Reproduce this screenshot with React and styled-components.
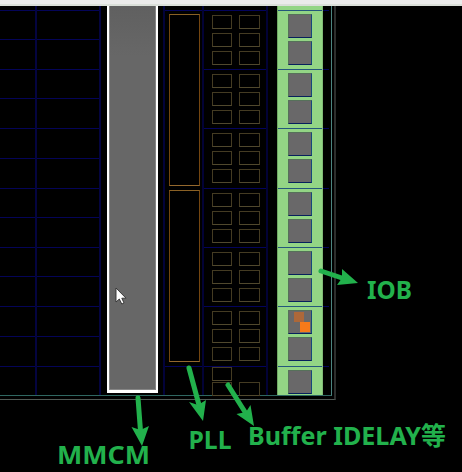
import React from "react";
import styled, { createGlobalStyle } from "styled-components";

const GlobalStyle = createGlobalStyle`
  * { box-sizing: border-box; }
  body { margin: 0; background: #000; overflow: hidden; }
`;

const GREEN = "#22b14c";
const NAVY = "#03035c";

const Page = styled.main`
  position: relative;
  width: 462px;
  height: 472px;
  background: #000;
  overflow: hidden;
`;

const TopBar = styled.header`
  height: 6px;
  background: #ebebeb;
  border-bottom: 2px solid #dadfd9;
`;

const Package = styled.section`
  width: 336px;
  height: 394px;
  padding: 0 3px 3px 0;
  border-right: 2px solid #2c2e2d;
  border-bottom: 1px solid #515a56;
`;

const Die = styled.div`
  display: flex;
  width: 332px;
  height: 390px;
  border-right: 1px solid #4d8580;
  border-bottom: 1px solid #2f6761;
`;

const Fabric = styled.div`
  display: grid;
  grid-template-columns: 37px 64px;
  width: 107px;
`;

const FabricColumn = styled.div`
  border-right: 2px solid #040440;
`;

const FabricTile = styled.div`
  height: ${(p) => p.$h}px;
  border-bottom: 1px solid #040458;
`;

const ClockManager = styled.div`
  width: 51px;
  height: 387px;
  border: solid #fff;
  border-width: 0 2px 3px;
  background: linear-gradient(#606060, #676767 50px);
  box-shadow: inset 1px -1px 0 #858585, inset -1px 0 0 #858585;
`;

const PllRegion = styled.div`
  width: 41px;
  margin-left: 5px;
  border-left: 2px solid #02023a;
  border-right: 2px solid #020236;
`;

const RowLine = styled.div`
  height: 5px;
  border-bottom: 1px solid ${(p) => p.$c || NAVY};
`;

const PllBox = styled.div`
  width: 31px;
  height: 172px;
  margin: ${(p) => p.$top}px 0 0 4px;
  border: 1px solid #744610;
  border-top-color: #8a6125;
  border-bottom-color: #94682d;
`;

const BufferRegion = styled.div`
  width: 64px;
  height: 389px;
  border-right: 2px solid #020236;
`;

const BufferBank = styled.div`
  display: grid;
  grid-template: repeat(3, 14px) / 20px 21px;
  column-gap: 7px;
  row-gap: 4px;
  height: ${(p) => p.$h}px;
  padding: 4px 0 0 8px;
  border-bottom: 1px solid ${NAVY};
`;

const BufferFoot = styled.div`
  display: grid;
  grid-template: repeat(2, 14px) / 20px 21px;
  column-gap: 7px;
  row-gap: 1px;
  height: 29px;
  overflow: hidden;
  padding-left: 8px;
`;

const Buffer = styled.div`
  border: 1px solid #443b22;
  border-bottom-color: #50482d;
  grid-column: ${(p) => p.$col || "auto"};
`;

const IoStrip = styled.div`
  width: 46px;
  height: 389px;
  margin-left: 9px;
  background: #93d585;
  border-left: 1px solid #70aa64;
  border-right: 1px solid #81ba76;
`;

const IoBank = styled.div`
  display: flex;
  flex-direction: column;
  gap: 3px;
  height: ${(p) => p.$h}px;
  padding: 3px 0 0 10px;
  border-bottom: 1px solid #24577b;
`;

const IoFoot = styled.div`
  padding: 3px 0 0 10px;
`;

const IoPad = styled.div`
  width: 24px;
  height: 24px;
  padding: 1px 0 0 5px;
  background: #696869;
  border: 1px solid #56715a;
  border-right-color: #17477a;
  border-bottom-color: #07205c;
`;

const Site = styled.div`
  width: 10px;
  height: 10px;
  margin-left: ${(p) => p.$x}px;
  background: ${(p) => p.$c};
`;

const EdgeColumn = styled.div`
  width: 6px;
`;

const EdgeTick = styled.div`
  height: ${(p) => p.$h}px;
  border-bottom: 1px solid ${NAVY};
`;

const Overlay = styled.svg`
  position: absolute;
  inset: 0;
  width: 462px;
  height: 472px;
`;

const Label = styled.text`
  font-family: "Noto Sans", "Noto Sans CJK SC", sans-serif;
  font-size: 25px;
  font-weight: 700;
  fill: ${GREEN};
`;

const BANKS = [59, 59, 60, 59, 59, 60];
const FABRIC_ROWS = [5, 29, 30, 29, 30, 30, 30, 29, 30, 29, 30, 30, 30];

const LABELS = [
  { text: "IOB", x: 367, y: 299, width: 45 },
  { text: "PLL", x: 188.5, y: 449, width: 43 },
  { text: "MMCM", x: 57, y: 464, width: 93 },
  { text: "Buffer IDELAY", x: 248, y: 445, width: 173 },
  { text: "等", x: 421, y: 445, width: 25 },
];

const ARROWS = [
  { from: [321, 271], to: [345, 279], head: "358,283 337,285 342,278 342,269" },
  { from: [189, 368], to: [199, 405], head: "203,421 189,402 198,405 206,400" },
  { from: [228, 385], to: [245, 412], head: "254,426 236.5,414 246,412 250.5,405" },
  { from: [138, 398], to: [140.5, 431], head: "142,446 131.5,427 140.5,430 149,426" },
];

function FabricTiles() {
  return FABRIC_ROWS.map((h, i) => <FabricTile key={i} $h={h} />);
}

function PllColumn() {
  return (
    <PllRegion>
      <RowLine />
      <PllBox $top={3} />
      <PllBox $top={4} />
      <RowLine />
    </PllRegion>
  );
}

function BufferColumn() {
  return (
    <BufferRegion>
      <RowLine />
      {BANKS.map((h, i) => (
        <BufferBank key={i} $h={h}>
          {Array.from({ length: 6 }, (_, n) => <Buffer key={n} />)}
        </BufferBank>
      ))}
      <BufferFoot>
        <Buffer $col="1" />
        <Buffer $col="1" />
        <Buffer $col="2" />
      </BufferFoot>
    </BufferRegion>
  );
}

function IoColumn() {
  return (
    <IoStrip>
      <RowLine $c="#24577b" />
      {BANKS.map((h, i) => (
        <IoBank key={i} $h={h}>
          <IoPad>
            {i === 5 && (
              <>
                <Site $x={0} $c="#ad6839" />
                <Site $x={6} $c="#f67a19" />
              </>
            )}
          </IoPad>
          <IoPad />
        </IoBank>
      ))}
      <IoFoot>
        <IoPad />
      </IoFoot>
    </IoStrip>
  );
}

function Arrow({ from, to, head }) {
  return (
    <g fill={GREEN} stroke={GREEN}>
      <line x1={from[0]} y1={from[1]} x2={to[0]} y2={to[1]} strokeWidth="5" strokeLinecap="round" />
      <polygon points={head} stroke="none" />
    </g>
  );
}

export default function App() {
  return (
    <Page>
      <GlobalStyle />
      <TopBar />
      <Package>
        <Die>
          <Fabric>
            <FabricColumn><FabricTiles /></FabricColumn>
            <FabricColumn><FabricTiles /></FabricColumn>
          </Fabric>
          <ClockManager />
          <PllColumn />
          <BufferColumn />
          <IoColumn />
          <EdgeColumn>
            <RowLine />
            {BANKS.map((h, i) => <EdgeTick key={i} $h={h} />)}
          </EdgeColumn>
        </Die>
      </Package>
      <Overlay viewBox="0 0 462 472">
        {ARROWS.map((a) => <Arrow key={a.head} {...a} />)}
        {LABELS.map((l) => (
          <Label key={l.text} x={l.x} y={l.y} textLength={l.width} lengthAdjust="spacingAndGlyphs">{l.text}</Label>
        ))}
        <path d="M116 288 V302 L119.3 299 L121.8 304 L124 303 L121.8 298.2 H126 Z" fill="#fff" stroke="#303030" strokeWidth="0.9" />
      </Overlay>
    </Page>
  );
}
